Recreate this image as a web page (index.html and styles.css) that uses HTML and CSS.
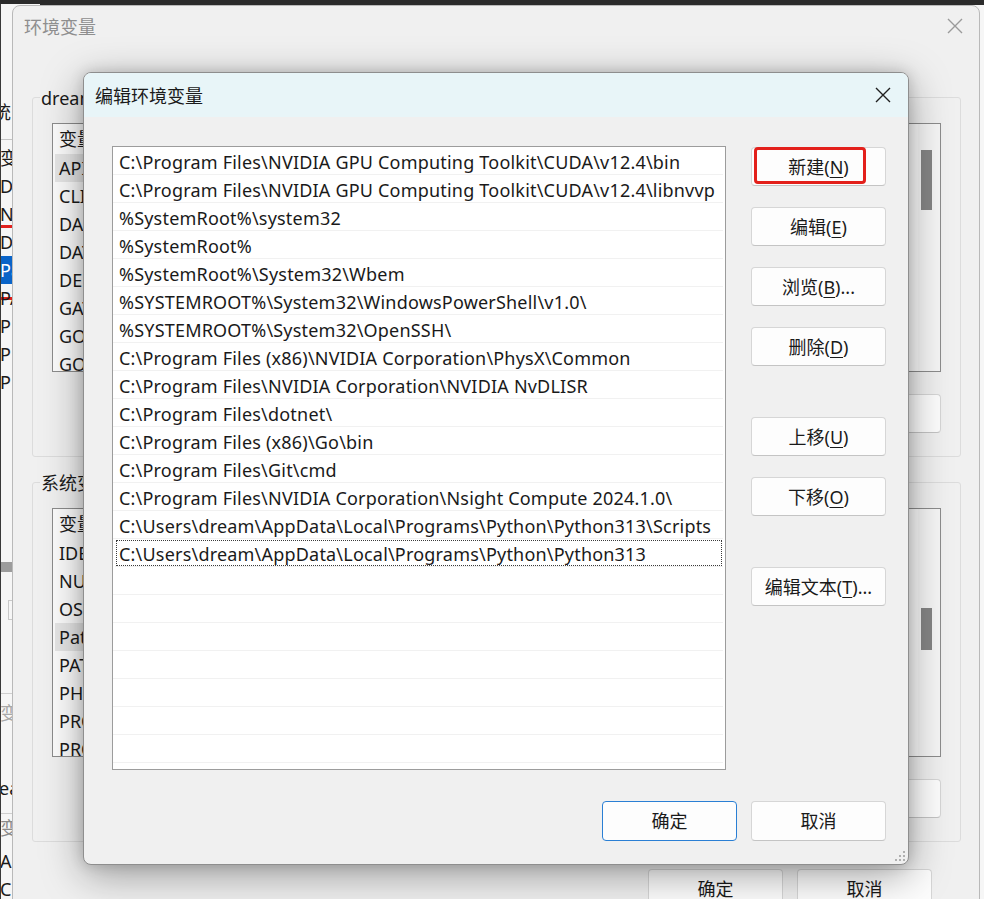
FILE: index.html
```html
<!DOCTYPE html>
<html lang="zh-CN">
<head>
<meta charset="utf-8">
<title>编辑环境变量</title>
<link rel="stylesheet" href="styles.css">
</head>
<body>
<div class="desktop">
  <div class="topstrip"></div>

  <div class="win-far">
    <div class="far-label">系统</div>
    <div class="far-list">
      <div class="far-row">变量</div>
      <div class="far-row">DATA</div>
      <div class="far-row red-under">NUM</div>
      <div class="far-row">DS</div>
      <div class="far-row far-sel">Path</div>
      <div class="far-row red-mid">PA</div>
      <div class="far-row">PH</div>
      <div class="far-row">PR</div>
      <div class="far-row">PR</div>
    </div>
    <div class="far-bar"></div>
    <div class="far-box"></div>
    <div class="far-line"></div>
    <div class="far-row far-muted">变量</div>
    <div class="far-row far-ea">eam</div>
    <div class="far-line far-line2"></div>
    <div class="far-row far-muted2">变量</div>
    <div class="far-row far-a">API</div>
    <div class="far-row">CLI</div>
  </div>

  <div class="win-env">
    <div class="env-title">
      <span>环境变量</span>
      <svg class="x-icon" width="16" height="16" viewBox="0 0 16 16"><path d="M1 1L15 15M15 1L1 15" stroke="#9a9a9a" stroke-width="1.4" fill="none"/></svg>
    </div>

    <div class="group">
      <div class="group-label">dream 的用户变量(U)</div>
      <div class="vlist">
        <div class="vlist-rows">
          <div class="vrow vhead">变量</div>
          <div class="vrow vhover">API_KEY</div>
          <div class="vrow">CLINK_HOME</div>
          <div class="vrow">DASHSCOPE_API_KEY</div>
          <div class="vrow">DATA_PATH</div>
          <div class="vrow">DEEPSEEK_API_KEY</div>
          <div class="vrow">GATEWAY</div>
          <div class="vrow">GOPATH</div>
          <div class="vrow">GOROOT</div>
        </div>
        <div class="vscroll"><div class="thumb thumb-user"></div></div>
      </div>
      <div class="btnrow">
        <button class="btn btn-bg">新建(N)...</button>
        <button class="btn btn-bg">编辑(E)...</button>
        <button class="btn btn-bg">删除(D)</button>
      </div>
    </div>

    <div class="group group-sys">
      <div class="group-label">系统变量(S)</div>
      <div class="vlist">
        <div class="vlist-rows">
          <div class="vrow vhead vhead-sys">变量</div>
          <div class="vrow">IDEA_HOME</div>
          <div class="vrow">NUMBER_OF_PROCESSORS</div>
          <div class="vrow">OS</div>
          <div class="vrow vhover">Path</div>
          <div class="vrow">PATHEXT</div>
          <div class="vrow">PHP_HOME</div>
          <div class="vrow">PROCESSOR_ARCHITECTURE</div>
          <div class="vrow">PROCESSOR_IDENTIFIER</div>
        </div>
        <div class="vscroll"><div class="thumb thumb-sys"></div></div>
      </div>
      <div class="btnrow">
        <button class="btn btn-bg">新建(W)...</button>
        <button class="btn btn-bg">编辑(I)...</button>
        <button class="btn btn-bg">删除(L)</button>
      </div>
    </div>

    <div class="env-actions">
      <button class="btn btn-env">确定</button>
      <button class="btn btn-env">取消</button>
    </div>
  </div>

  <div class="win-edit">
    <div class="edit-title">
      <span>编辑环境变量</span>
      <svg class="x-icon" width="16" height="16" viewBox="0 0 16 16"><path d="M1 1L15 15M15 1L1 15" stroke="#1f1f1f" stroke-width="1.4" fill="none"/></svg>
    </div>
    <div class="edit-body">
      <div class="pathlist">
        <div class="prow">C:\Program Files\NVIDIA GPU Computing Toolkit\CUDA\v12.4\bin</div>
        <div class="prow">C:\Program Files\NVIDIA GPU Computing Toolkit\CUDA\v12.4\libnvvp</div>
        <div class="prow">%SystemRoot%\system32</div>
        <div class="prow">%SystemRoot%</div>
        <div class="prow">%SystemRoot%\System32\Wbem</div>
        <div class="prow">%SYSTEMROOT%\System32\WindowsPowerShell\v1.0\</div>
        <div class="prow">%SYSTEMROOT%\System32\OpenSSH\</div>
        <div class="prow">C:\Program Files (x86)\NVIDIA Corporation\PhysX\Common</div>
        <div class="prow">C:\Program Files\NVIDIA Corporation\NVIDIA NvDLISR</div>
        <div class="prow">C:\Program Files\dotnet\</div>
        <div class="prow">C:\Program Files (x86)\Go\bin</div>
        <div class="prow">C:\Program Files\Git\cmd</div>
        <div class="prow">C:\Program Files\NVIDIA Corporation\Nsight Compute 2024.1.0\</div>
        <div class="prow">C:\Users\dream\AppData\Local\Programs\Python\Python313\Scripts</div>
        <div class="prow prow-focus">C:\Users\dream\AppData\Local\Programs\Python\Python313</div>
        <div class="prow"></div>
        <div class="prow"></div>
        <div class="prow"></div>
        <div class="prow"></div>
        <div class="prow"></div>
        <div class="prow"></div>
        <div class="prow"></div>
        <div class="prow"></div>
      </div>
      <div class="btncol">
        <button class="btn btn-side btn-new">新建(<u>N</u>)<span class="mark"></span></button>
        <button class="btn btn-side">编辑(<u>E</u>)</button>
        <button class="btn btn-side">浏览(<u>B</u>)...</button>
        <button class="btn btn-side">删除(<u>D</u>)</button>
        <button class="btn btn-side btn-gap">上移(<u>U</u>)</button>
        <button class="btn btn-side">下移(<u>O</u>)</button>
        <button class="btn btn-side btn-gap">编辑文本(<u>T</u>)...</button>
      </div>
    </div>
    <div class="edit-actions">
      <button class="btn btn-act btn-default">确定</button>
      <button class="btn btn-act">取消</button>
    </div>
    <svg class="grip" width="10" height="10" viewBox="0 0 10 10">
      <rect x="8" y="0" width="2" height="2" fill="#b0b0b0"/>
      <rect x="4" y="4" width="2" height="2" fill="#b0b0b0"/>
      <rect x="8" y="4" width="2" height="2" fill="#b0b0b0"/>
      <rect x="0" y="8" width="2" height="2" fill="#b0b0b0"/>
      <rect x="4" y="8" width="2" height="2" fill="#b0b0b0"/>
      <rect x="8" y="8" width="2" height="2" fill="#b0b0b0"/>
    </svg>
  </div>
</div>
</body>
</html>
```

FILE: styles.css
```css
* { box-sizing: border-box; }
html, body { margin: 0; padding: 0; }
body {
  width: 984px;
  height: 899px;
  overflow: hidden;
  background: #f6f6f6;
  font-family: "Noto Sans", "Noto Sans CJK SC", sans-serif;
  font-size: 18px;
  color: #1a1a1a;
}
.desktop {
  position: relative;
  width: 984px;
  height: 899px;
  overflow: hidden;
}
.topstrip {
  height: 5px;
  background: #2b2b2b;
}

/* far window on the left edge */
.win-far {
  position: absolute;
  left: 0;
  top: 4px;
  width: 40px;
  height: 895px;
  background: #f6f6f6;
  border-left: 1px solid #3a3a3a;
  overflow: hidden;
  line-height: 28px;
}
.far-label { margin-top: 94px; margin-left: -26px; height: 28px; white-space: nowrap; }
.far-list { margin-top: 13px; border-top: 1px solid #c4c4c4; padding-top: 4px; }
.far-row { height: 28px; white-space: nowrap; padding-left: 0; margin-left: -1px; }
.far-sel { background: #0a64c8; color: #fff; }
.red-under { box-shadow: inset 0 -3px 0 #e0201c; }
.red-mid { background: linear-gradient(#f6f6f6 0 13px, #e0201c 13px 16px, #f6f6f6 16px); }
.far-bar { margin-top: 166px; height: 10px; background: #9c9c9c; }
.far-box { margin: 28px 0 0 7px; width: 20px; height: 20px; border: 1px solid #c8c8c8; }
.far-line { margin-top: 73px; border-top: 1px solid #cfcfcf; }
.far-muted { margin-top: 5px; color: #a8a8a8; }
.far-ea { margin-top: 47px; margin-left: -2px; }
.far-line2 { margin-top: 11px; }
.far-muted2 { color: #8a8a8a; }
.far-a { margin-top: 5px; }

/* background "环境变量" window */
.win-env {
  position: absolute;
  left: 12px;
  top: 5px;
  width: 968px;
  height: 940px;
  background: #f0f0f0;
  border: 1px solid #b9b9b9;
  border-radius: 8px 8px 0 0;
}
.env-title {
  height: 40px;
  display: flex;
  align-items: center;
  justify-content: space-between;
  padding: 0 16px 0 11px;
  color: #8e8e8e;
}
.group {
  margin: 51px 18px 0 19px;
  border: 1px solid #dcdcdc;
  border-radius: 3px;
  padding: 0 19px 23px 19px;
}
.group-sys { margin-top: 25px; }
.group-label {
  width: fit-content;
  height: 24px;
  line-height: 24px;
  margin: -12px 0 0 -12px;
  padding: 0 1px;
  background: #f0f0f0;
  white-space: nowrap;
}
.vlist {
  margin-top: 13px;
  height: 249px;
  border: 1px solid #8c8c8c;
  background: #fcfcfc;
  display: flex;
  overflow: hidden;
}
.vlist-rows { flex: 1; }
.vrow {
  height: 28px;
  line-height: 28px;
  padding-left: 6px;
  white-space: nowrap;
}
.vhead { height: 30px; line-height: 30px; }
.vhover { background: #e6e6e6; margin: 0 40px 0 2px; padding-left: 4px; }
.vscroll { width: 22px; background: #f6f6f6; }
.thumb { width: 11px; margin-left: 3px; background: #858585; }
.thumb-user { margin-top: 26px; height: 60px; }
.thumb-sys { margin-top: 99px; height: 42px; }
.btnrow {
  display: flex;
  justify-content: flex-end;
  gap: 10px;
  margin-top: 22px;
}

.btn {
  font-family: "Noto Sans", "Noto Sans CJK SC", sans-serif;
  font-size: 18px;
  color: #1a1a1a;
  background: #fdfdfd;
  border: 1px solid #d6d6d6;
  border-bottom-color: #c4c4c4;
  border-radius: 4px;
  padding: 0;
  margin: 0;
  line-height: 1;
}
.btn u { text-underline-offset: 3px; text-decoration-thickness: 1px; }
.btn-bg { width: 150px; height: 39px; }
.env-actions {
  display: flex;
  justify-content: flex-end;
  gap: 14px;
  padding-right: 47px;
  margin-top: 27px;
}
.btn-env { width: 135px; height: 40px; }

/* front "编辑环境变量" dialog */
.win-edit {
  position: absolute;
  left: 83px;
  top: 72px;
  width: 826px;
  height: 793px;
  background: #f0f0f0;
  border: 1px solid #8e8e8e;
  border-radius: 8px;
  overflow: hidden;
  display: flex;
  flex-direction: column;
  box-shadow: 0 10px 42px rgba(0, 0, 0, 0.36), 0 0 14px rgba(0, 0, 0, 0.16);
}
.edit-title {
  height: 44px;
  flex: none;
  background: #e8f5f8;
  display: flex;
  align-items: center;
  justify-content: space-between;
  padding: 0 17px 0 11px;
  color: #1a1a1a;
}
.edit-body {
  display: flex;
  gap: 25px;
  padding: 29px 22px 0 28px;
}
.pathlist {
  width: 614px;
  height: 624px;
  flex: none;
  background: #fff;
  border: 1px solid #9c9c9c;
  overflow: hidden;
}
.prow {
  height: 28px;
  line-height: 30px;
  padding-left: 6px;
  margin-right: 2px;
  border-bottom: 1px solid #f1f1f1;
  white-space: nowrap;
  letter-spacing: 0.2px;
}
.prow-focus {
  outline: 1px dotted #3a3a3a;
  outline-offset: -2px;
  margin-left: 2px;
  padding-left: 4px;
}
.btncol {
  width: 135px;
  display: flex;
  flex-direction: column;
  gap: 21px;
  padding-top: 1px;
}
.btn-side { height: 39px; width: 135px; }
.btn-gap { margin-top: 30px; }
.btn-new { position: relative; }
.mark {
  position: absolute;
  left: 2px;
  top: -1px;
  width: 112px;
  height: 37px;
  border: 3px solid #e3201b;
  border-radius: 4px;
}
.edit-actions {
  display: flex;
  justify-content: flex-end;
  gap: 14px;
  padding-right: 22px;
  margin-top: 31px;
}
.btn-act { width: 135px; height: 40px; }
.btn-default { border: 1px solid #2a7fd4; }
.grip {
  margin: auto 3px 3px 0;
  align-self: flex-end;
  flex: none;
}
```
